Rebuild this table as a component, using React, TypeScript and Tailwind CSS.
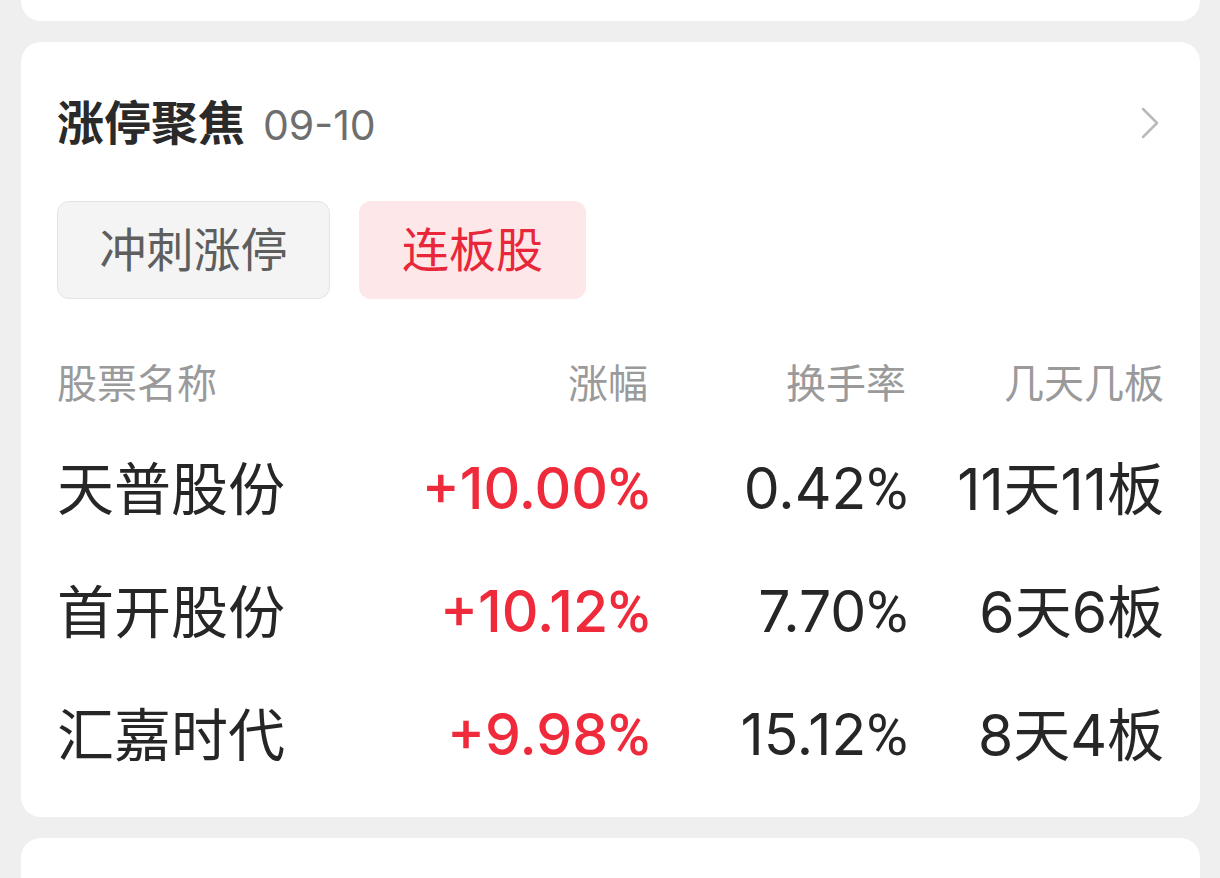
import React from 'react';

const rows = [
  { name: '天普股份', change: '+10.00', turnover: '0.42', boards: '11天11板' },
  { name: '首开股份', change: '+10.12', turnover: '7.70', boards: '6天6板' },
  { name: '汇嘉时代', change: '+9.98', turnover: '15.12', boards: '8天4板' },
];

const font = "font-['Inter','Noto_Sans_CJK_SC',sans-serif]";

// percent sign from Roboto: Inter's one is too wide next to these digits
const Pct: React.FC<{ value: string; className?: string }> = ({ value, className }) => (
  <span className={`text-right ${className ?? ''}`}>
    {value}
    <span className="font-['Roboto',sans-serif]">%</span>
  </span>
);

const App: React.FC = () => {
  return (
    <div className={`min-h-[878px] bg-[#efefef] pl-[21px] pr-[20px] overflow-hidden ${font}`}>
      {/* previous card, mostly scrolled off */}
      <div className="-mt-[20px] h-[41px] rounded-[20px] bg-white" />

      <div className="mt-[21px] rounded-[20px] bg-white px-[36px] pt-[49px] pb-[20px]">
        <div className="flex h-[64px] items-center justify-between">
          <div className="flex items-baseline gap-[18px]">
            <span className="text-[47px] font-bold text-[#2a2a2a]">涨停聚焦</span>
            <span className="text-[41px] text-[#6e6e6e]">09-10</span>
          </div>
          <svg width="20" height="32" viewBox="0 0 20 32" className="mr-[4px]">
            <polyline points="3,2 17,16 3,30" fill="none" stroke="#b9b9b9" strokeWidth="2.5" strokeLinecap="round" strokeLinejoin="round" />
          </svg>
        </div>

        <div className="mt-[46px] flex gap-[29px]">
          <button className="h-[98px] w-[273px] rounded-[12px] border border-[#e4e4e4] bg-[#f4f4f4] text-[47px] text-[#5e5e5e]">
            冲刺涨停
          </button>
          <button className="h-[98px] w-[227px] rounded-[12px] bg-[#fde7e8] text-[47px] text-[#e8283a]">
            连板股
          </button>
        </div>

        <div className="mt-[41px] grid h-[88px] grid-cols-[333px_258px_258px_258px] items-center text-[40px] text-[#9a9a9a]">
          <span>股票名称</span>
          <span className="text-right">涨幅</span>
          <span className="text-right">换手率</span>
          <span className="text-right">几天几板</span>
        </div>

        {rows.map((r) => (
          <div
            key={r.name}
            className="grid h-[123px] grid-cols-[333px_258px_258px_258px] items-center text-[57px] text-[#262626]"
          >
            <span>{r.name}</span>
            <Pct value={r.change} className="font-medium text-[#ee2a3b] -mr-[2px]" />
            <Pct value={r.turnover} className="-mr-[2px]" />
            <span className="text-right">{r.boards}</span>
          </div>
        ))}
      </div>

      <div className="mt-[21px] h-[60px] rounded-[20px] bg-white" />
    </div>
  );
};

export default App;
